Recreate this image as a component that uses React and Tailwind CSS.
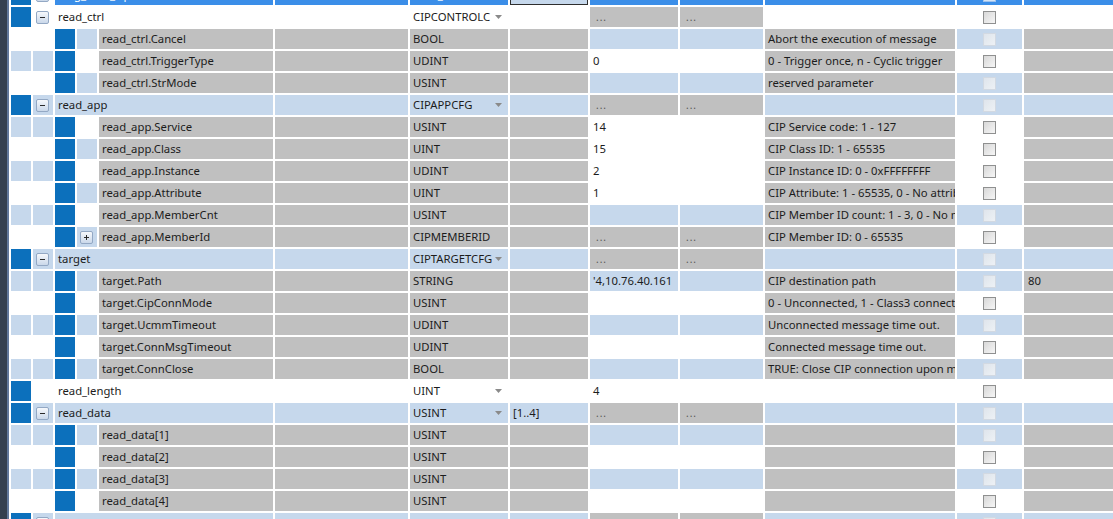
import React from 'react';

const W = 'bg-white';
const L = 'bg-[#c6d8ec]';
const G = 'bg-[#c0c0c0]';
const BLUE = 'bg-[#0c70bc]';

// a: outline stripe, d: tree-line cell, v: value/checkbox cells
const rows = [
  { kind: 'top', name: 'read_ctrl', type: 'CIPCONTROLC', drop: true, exp: '-', bg: W, init: '...', col: '...' },
  { kind: 'child', name: 'read_ctrl.Cancel', type: 'BOOL', a: W, d: L, v: L, comment: 'Abort the execution of message' },
  { kind: 'child', name: 'read_ctrl.TriggerType', type: 'UDINT', a: L, d: W, v: W, init: '0', comment: '0 - Trigger once, n - Cyclic trigger' },
  { kind: 'child', name: 'read_ctrl.StrMode', type: 'USINT', a: W, d: L, v: L, comment: 'reserved parameter' },
  { kind: 'top', name: 'read_app', type: 'CIPAPPCFG', drop: true, exp: '-', bg: L, init: '...', col: '...' },
  { kind: 'child', name: 'read_app.Service', type: 'USINT', a: L, d: W, v: W, init: '14', comment: 'CIP Service code: 1 - 127' },
  { kind: 'child', name: 'read_app.Class', type: 'UINT', a: W, d: L, v: W, init: '15', comment: 'CIP Class ID: 1 - 65535' },
  { kind: 'child', name: 'read_app.Instance', type: 'UDINT', a: L, d: W, v: W, init: '2', comment: 'CIP Instance ID: 0 - 0xFFFFFFFF' },
  { kind: 'child', name: 'read_app.Attribute', type: 'UINT', a: W, d: L, v: W, init: '1', comment: 'CIP Attribute: 1 - 65535, 0 - No attribute' },
  { kind: 'child', name: 'read_app.MemberCnt', type: 'USINT', a: L, d: W, v: L, comment: 'CIP Member ID count: 1 - 3, 0 - No member' },
  { kind: 'child', name: 'read_app.MemberId', type: 'CIPMEMBERID', a: W, d: L, v: W, exp: '+', init: '...', col: '...', comment: 'CIP Member ID: 0 - 65535' },
  { kind: 'top', name: 'target', type: 'CIPTARGETCFG', drop: true, exp: '-', bg: L, init: '...', col: '...' },
  { kind: 'child', name: 'target.Path', type: 'STRING', a: L, d: L, v: L, init: "'4,10.76.40.161", comment: 'CIP destination path', last: '80' },
  { kind: 'child', name: 'target.CipConnMode', type: 'USINT', a: W, d: W, v: W, comment: '0 - Unconnected, 1 - Class3 connected' },
  { kind: 'child', name: 'target.UcmmTimeout', type: 'UDINT', a: L, d: L, v: L, comment: 'Unconnected message time out.' },
  { kind: 'child', name: 'target.ConnMsgTimeout', type: 'UDINT', a: W, d: W, v: W, comment: 'Connected message time out.' },
  { kind: 'child', name: 'target.ConnClose', type: 'BOOL', a: L, d: L, v: L, comment: 'TRUE: Close CIP connection upon message done' },
  { kind: 'top', name: 'read_length', type: 'UINT', drop: true, bg: W, init: '4' },
  { kind: 'top', name: 'read_data', type: 'USINT', drop: true, exp: '-', bg: L, dim: '[1..4]', init: '...', col: '...' },
  { kind: 'child', name: 'read_data[1]', type: 'USINT', a: L, d: L, v: L },
  { kind: 'child', name: 'read_data[2]', type: 'USINT', a: W, d: W, v: W },
  { kind: 'child', name: 'read_data[3]', type: 'USINT', a: L, d: L, v: L },
  { kind: 'child', name: 'read_data[4]', type: 'USINT', a: W, d: W, v: W },
  { kind: 'top', name: 'MOD_WRITE', type: 'MOD_CIP_CONFIG', exp: '+', bg: L, init: '...', col: '...' },
];

function Expander({ sign }) {
  return (
    <div className="ml-[3px] mt-[4px] w-[13px] h-[13px] rounded-[2px] border border-[#93a8c4] bg-gradient-to-b from-[#f6f8fb] to-[#cad8ea] flex items-center justify-center relative">
      <span className="block w-[5px] h-[1px] bg-[#2a2a2a]" />
      {sign === '+' && <span className="absolute block w-[1px] h-[5px] bg-[#2a2a2a]" />}
    </div>
  );
}

function Checkbox({ enabled }) {
  return enabled ? (
    <div className="w-[13px] h-[13px] border border-[#8f9090] bg-gradient-to-br from-[#d8d8d8] to-[#f6f6f6]" />
  ) : (
    <div className="w-[13px] h-[13px] border border-[#d2d9e2] bg-gradient-to-br from-[#dfe5ec] to-[#edf1f5]" />
  );
}

function Arrow() {
  return (
    <svg width="7" height="4" viewBox="0 0 7 4" className="shrink-0 ml-[3px]">
      <path d="M0 0 L7 0 L3.5 4 Z" fill="#8a8a8a" />
    </svg>
  );
}

function Cell({ w, bg, children, className = '' }) {
  return (
    <div className={`${w} ${bg} h-full shrink-0 overflow-hidden whitespace-nowrap leading-[20px] ${className}`}>
      {children}
    </div>
  );
}

function Dots() {
  return <span className="pl-[3px] text-[10px] text-[#555] tracking-[1px]">...</span>;
}

function TopRow({ r }) {
  const bg = r.bg;
  const initBg = r.init === '...' ? G : bg;
  const colBg = r.col === '...' ? G : bg;
  return (
    <div className="flex gap-[2px] h-[20px]">
      <Cell w="w-[20px]" bg={BLUE} />
      <Cell w="w-[20px]" bg={bg}>{r.exp && <Expander sign={r.exp} />}</Cell>
      <Cell w="w-[218px]" bg={bg} className="pl-[3px]">{r.name}</Cell>
      <Cell w="w-[133px]" bg={bg} />
      <Cell w="w-[98px]" bg={bg} className="pl-[3px] pr-[6px] flex items-center">
        <span className="flex-1 min-w-0 overflow-hidden">{r.type}</span>
        {r.drop && <Arrow />}
      </Cell>
      <Cell w="w-[78px]" bg={bg} className="pl-[3px]">{r.dim}</Cell>
      <Cell w="w-[88px]" bg={initBg} className="pl-[3px]">
        {r.init === '...' ? <Dots /> : r.init}
      </Cell>
      <Cell w="w-[83px]" bg={colBg} className="pl-[3px]">
        {r.col === '...' ? <Dots /> : r.col}
      </Cell>
      <Cell w="w-[190px]" bg={bg} />
      <Cell w="w-[65px]" bg={bg} className="flex items-center justify-center">
        <Checkbox enabled={bg === W} />
      </Cell>
      <Cell w="w-[89px]" bg={bg} />
    </div>
  );
}

function ChildRow({ r }) {
  const valBg = r.init === '...' ? G : r.v;
  return (
    <div className="flex gap-[2px] h-[20px]">
      <Cell w="w-[20px]" bg={r.a} />
      <Cell w="w-[20px]" bg={r.a} />
      <Cell w="w-[20px]" bg={BLUE} />
      <Cell w="w-[20px]" bg={r.d}>{r.exp && <Expander sign={r.exp} />}</Cell>
      <Cell w="w-[174px]" bg={G} className="pl-[3px]">{r.name}</Cell>
      <Cell w="w-[133px]" bg={G} />
      <Cell w="w-[98px]" bg={G} className="pl-[3px]">{r.type}</Cell>
      <Cell w="w-[78px]" bg={G} />
      <Cell w="w-[88px]" bg={valBg} className="pl-[3px]">
        {r.init === '...' ? <Dots /> : r.init}
      </Cell>
      <Cell w="w-[83px]" bg={valBg} className="pl-[3px]">
        {r.col === '...' ? <Dots /> : null}
      </Cell>
      <Cell w="w-[190px]" bg={G} className="pl-[3px]">{r.comment}</Cell>
      <Cell w="w-[65px]" bg={r.v} className="flex items-center justify-center">
        <Checkbox enabled={r.v === W} />
      </Cell>
      <Cell w="w-[89px]" bg={G} className="pl-[4px]">{r.last}</Cell>
    </div>
  );
}

// selected instance row, scrolled mostly out of view
function SelectedRow() {
  const sel = 'bg-[#3b8ee8]';
  return (
    <div className="flex gap-[2px] h-[20px] text-white">
      <Cell w="w-[20px]" bg={BLUE} />
      <Cell w="w-[20px]" bg={W}><Expander sign="+" /></Cell>
      <Cell w="w-[218px]" bg={sel} className="pl-[3px]">msg_read_cip</Cell>
      <Cell w="w-[133px]" bg={sel} />
      <Cell w="w-[98px]" bg={sel} className="pl-[3px]">MSG_CIPREAD</Cell>
      <Cell w="w-[78px]" bg={L} className="border border-[#2e2e2e]" />
      <Cell w="w-[88px]" bg={sel} />
      <Cell w="w-[83px]" bg={sel} />
      <Cell w="w-[190px]" bg={sel} />
      <Cell w="w-[65px]" bg={sel} className="flex items-center justify-center">
        <div className="w-[13px] h-[13px] border border-[#9fc2ec] bg-[#d4e4f6]" />
      </Cell>
      <Cell w="w-[89px]" bg={sel} />
    </div>
  );
}

export default function App() {
  return (
    <div
      className="w-[1113px] h-[519px] overflow-hidden bg-white flex text-[11.3px] text-[#1c1c1c]"
      style={{ fontFamily: '"Segoe UI", "Noto Sans", sans-serif' }}
    >
      {/* window frame on the left */}
      <div className="w-[7px] h-full bg-[#35404f] shrink-0" />
      <div className="w-[2px] h-full bg-[#62789a] shrink-0" />
      <div className="ml-[2px] flex-1 overflow-hidden">
        <div className="-mt-[15px] flex flex-col gap-[2px]">
          <SelectedRow />
          {rows.map((r, i) =>
            r.kind === 'top' ? <TopRow key={i} r={r} /> : <ChildRow key={i} r={r} />
          )}
        </div>
      </div>
    </div>
  );
}
